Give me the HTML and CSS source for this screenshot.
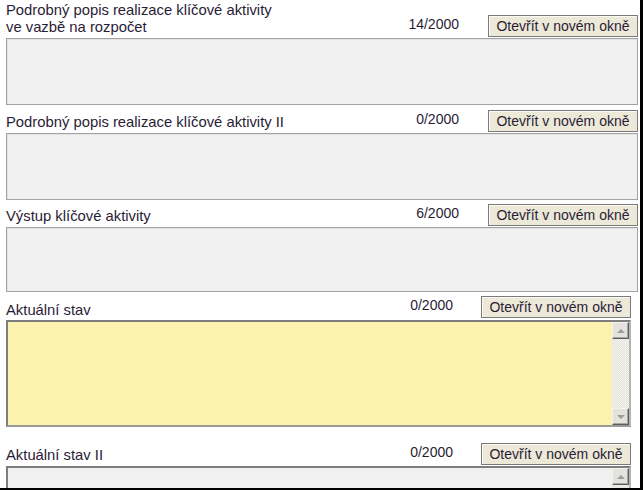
FILE: index.html
```html
<!DOCTYPE html>
<html lang="cs">
<head>
<meta charset="utf-8">
<title>Klíčové aktivity</title>
<link rel="stylesheet" href="styles.css">
</head>
<body>
<div class="page">
  <div class="field f1">
    <div class="head">
      <div class="label">Podrobný popis realizace klíčové aktivity<br>ve vazbě na rozpočet</div>
      <div class="count">14/2000</div>
      <button class="btn" type="button">Otevřít v novém okně</button>
    </div>
    <div class="ta grey h67"></div>
  </div>

  <div class="field f2">
    <div class="head">
      <div class="label">Podrobný popis realizace klíčové aktivity II</div>
      <div class="count">0/2000</div>
      <button class="btn" type="button">Otevřít v novém okně</button>
    </div>
    <div class="ta grey h67"></div>
  </div>

  <div class="field f3">
    <div class="head">
      <div class="label">Výstup klíčové aktivity</div>
      <div class="count">6/2000</div>
      <button class="btn" type="button">Otevřít v novém okně</button>
    </div>
    <div class="ta grey h65"></div>
  </div>

  <div class="field f4 narrow">
    <div class="head">
      <div class="label">Aktuální stav</div>
      <div class="count">0/2000</div>
      <button class="btn" type="button">Otevřít v novém okně</button>
    </div>
    <div class="ta inset yellow h107">
      <div class="ta-body"></div>
      <div class="sb">
        <div class="sb-btn"><span class="arr up"></span></div>
        <div class="sb-track"></div>
        <div class="sb-btn"><span class="arr down"></span></div>
      </div>
    </div>
  </div>

  <div class="field f5 narrow">
    <div class="head">
      <div class="label">Aktuální stav II</div>
      <div class="count">0/2000</div>
      <button class="btn" type="button">Otevřít v novém okně</button>
    </div>
    <div class="ta inset greyin h80">
      <div class="ta-body"></div>
      <div class="sb">
        <div class="sb-btn"><span class="arr up"></span></div>
        <div class="sb-track"></div>
        <div class="sb-btn"><span class="arr down"></span></div>
      </div>
    </div>
  </div>
</div>
</body>
</html>
```

FILE: styles.css
```css
html, body {
  margin: 0;
  padding: 0;
  background: #000;
}

.page {
  width: 640px;
  height: 488px;
  overflow: hidden;
  background: #fff;
  font-family: "Liberation Sans", Arial, sans-serif;
  font-size: 14px;
  color: #2b1c36;
}

.field {
  margin-left: 6px;
  width: 632px;
  display: flex;
  flex-direction: column;
}

.field.narrow {
  width: 625px;
}

.f1 { margin-top: 2px; }
.f2 { margin-top: 5px; }
.f3 { margin-top: 4px; }
.f4 { margin-top: 4px; }
.f5 { margin-top: 16px; }

.head {
  display: flex;
  align-items: flex-end;
}

.label {
  flex: 1;
  font-size: 14.8px;
  line-height: 17px;
  padding-bottom: 2px;
  white-space: nowrap;
}

.f4 .label { padding-bottom: 0; }

.count {
  line-height: 17px;
  padding-bottom: 5px;
  margin-right: 29px;
  text-align: right;
}

.narrow .count { margin-right: 28px; }

.btn {
  width: 150px;
  height: 22px;
  margin: 0 0 1px 0;
  padding: 0 4px;
  font-family: "Liberation Sans", Arial, sans-serif;
  font-size: 14px;
  color: #2b1c36;
  background: #ece9d8;
  border: 1px solid #7a7a7a;
  box-shadow: inset 1px 1px 0 #fbfaf5;
  text-align: center;
  line-height: 19px;
}

.ta {
  box-sizing: border-box;
}

.ta.grey {
  background: #f1f1f1;
  border: 1px solid #a3a3a3;
  box-shadow: inset 1px 1px 0 #e2e2e2;
}

.h67 { height: 67px; }
.h65 { height: 65px; }
.h107 { height: 107px; margin-top: 1px; }
.h80 { height: 80px; }

.ta.inset {
  display: flex;
  border: 2px solid;
  border-color: #7e7e7e #b5b5b5 #9a9a9a #7e7e7e;
}

.ta.yellow { background: #faf2ae; }
.ta.greyin { background: #f0f0f0; }

.ta-body { flex: 1; }

.sb {
  width: 17px;
  display: flex;
  flex-direction: column;
}

.sb-btn {
  box-sizing: border-box;
  width: 17px;
  height: 17px;
  background: #e4e2dc;
  border: 1px solid;
  border-color: #f4f3ef #5d5d5d #5d5d5d #f4f3ef;
  box-shadow: inset -1px -1px 0 #a8a6a0;
  display: flex;
  align-items: center;
  justify-content: center;
}

.sb-track {
  flex: 1;
  background: repeating-conic-gradient(#f5f4f0 0 25%, #e3e1db 0 50%) 0 0 / 2px 2px;
}

.arr {
  width: 0;
  height: 0;
  border-left: 4px solid transparent;
  border-right: 4px solid transparent;
}

.arr.up { border-bottom: 4px solid #9c9c9c; }
.arr.down { border-top: 4px solid #9c9c9c; }
```
